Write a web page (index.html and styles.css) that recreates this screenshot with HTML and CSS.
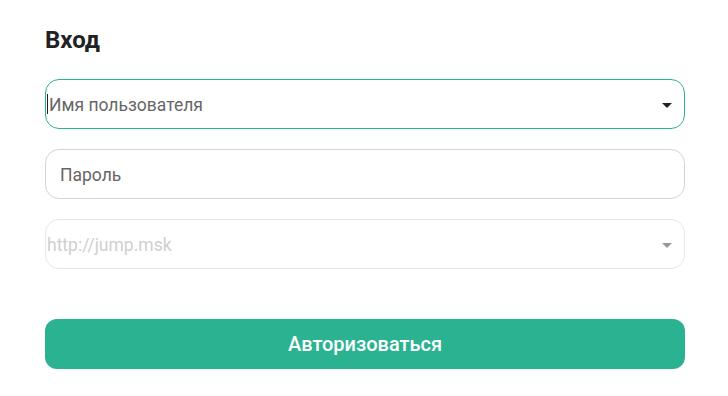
FILE: index.html
```html
<!DOCTYPE html>
<html lang="ru">
<head>
    <meta charset="UTF-8">
    <meta name="viewport" content="width=device-width, initial-scale=1.0">
    <title>Вход</title>
    <link rel="stylesheet" href="styles.css">
</head>
<body>
    <div class="login-form">
        <h1 class="title">Вход</h1>

        <div class="field field-select field-focus">
            <span class="caret"></span>
            <span class="placeholder">Имя пользователя</span>
            <span class="arrow"></span>
        </div>

        <div class="field field-text">
            <span class="placeholder">Пароль</span>
        </div>

        <div class="field field-select field-disabled">
            <span class="placeholder">http://jump.msk</span>
            <span class="arrow"></span>
        </div>

        <button class="button">Авторизоваться</button>
    </div>
</body>
</html>
```

FILE: styles.css
```css
body {
    margin: 0;
    background-color: #ffffff;
    font-family: 'Roboto', 'Liberation Sans', sans-serif;
}

.login-form {
    width: 640px;
    padding: 26px 0 0 45px;
    display: flex;
    flex-direction: column;
}

.title {
    margin: 0 0 25px 0;
    font-size: 24px;
    font-weight: bold;
    color: #222222;
    line-height: 28px;
}

.field {
    height: 50px;
    box-sizing: border-box;
    border: 1px solid #d4d4d4;
    border-radius: 14px;
    display: flex;
    align-items: center;
    margin-bottom: 20px;
    font-size: 17.5px;
    color: #666666;
}

.field-select {
    padding: 0 12px 0 1px;
}

.field-text {
    padding: 0 14px;
}

.field-focus {
    border-color: #2bb391;
}

.field-disabled {
    border-color: #e6e6e6;
    color: #cfcfcf;
}

.placeholder {
    flex: 1;
    padding-top: 2px;
}

.caret {
    width: 1px;
    height: 20px;
    background-color: #222222;
    margin-right: 1px;
}

.arrow {
    width: 0;
    height: 0;
    border-left: 5px solid transparent;
    border-right: 5px solid transparent;
    border-top: 5px solid #222222;
    margin-top: 2px;
}

.field-disabled .arrow {
    border-top-color: #999999;
}

.button {
    margin-top: 30px;
    height: 50px;
    border: none;
    border-radius: 12px;
    background-color: #2bb391;
    color: #ffffff;
    font-family: 'Roboto', 'Liberation Sans', sans-serif;
    font-size: 20px;
    font-weight: 500;
    cursor: pointer;
}
```
